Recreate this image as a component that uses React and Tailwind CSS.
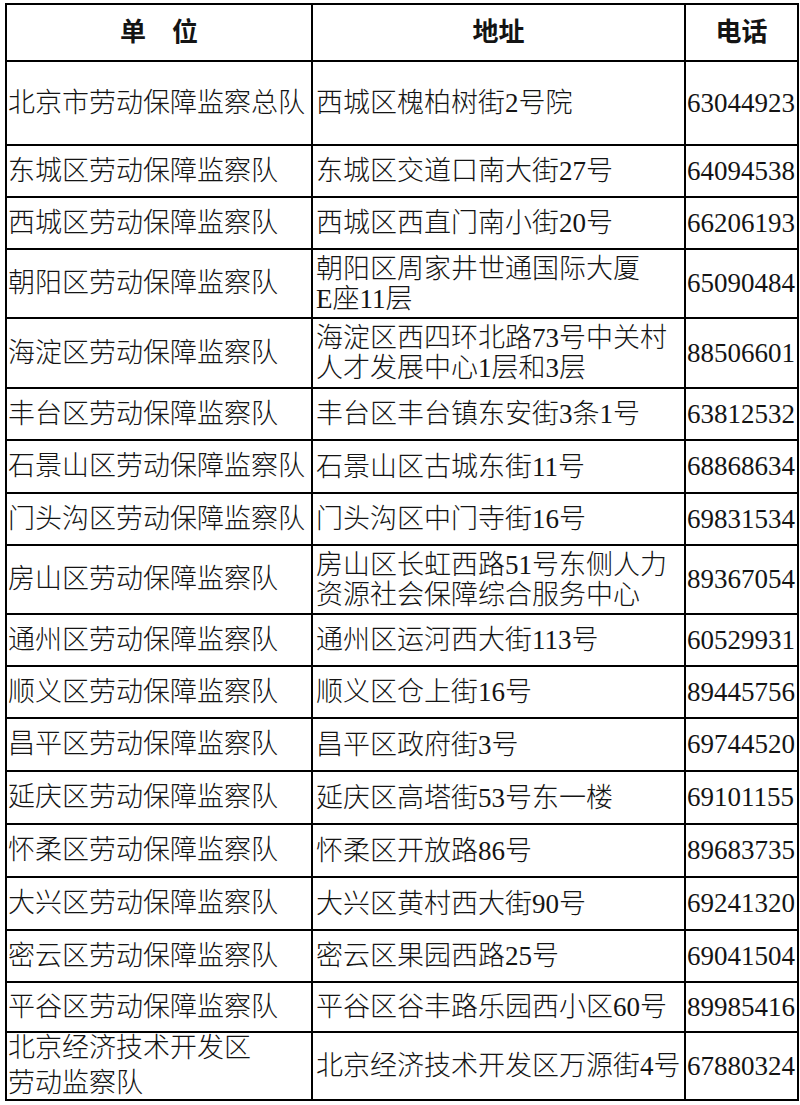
import React from "react";

const rows = [
  { h: "h-[84px]", a: "北京市劳动保障监察总队", b: "西城区槐柏树街2号院", c: "63044923" },
  { h: "h-[52px]", a: "东城区劳动保障监察队", b: "东城区交道口南大街27号", c: "64094538" },
  { h: "h-[52px]", a: "西城区劳动保障监察队", b: "西城区西直门南小街20号", c: "66206193" },
  { h: "h-[69px]", a: "朝阳区劳动保障监察队", b: ["朝阳区周家井世通国际大厦", "E座11层"], c: "65090484" },
  { h: "h-[70px]", a: "海淀区劳动保障监察队", b: ["海淀区西四环北路73号中关村", "人才发展中心1层和3层"], c: "88506601" },
  { h: "h-[52px]", a: "丰台区劳动保障监察队", b: "丰台区丰台镇东安街3条1号", c: "63812532" },
  { h: "h-[53px]", a: "石景山区劳动保障监察队", b: "石景山区古城东街11号", c: "68868634" },
  { h: "h-[52px]", a: "门头沟区劳动保障监察队", b: "门头沟区中门寺街16号", c: "69831534" },
  { h: "h-[69px]", a: "房山区劳动保障监察队", b: ["房山区长虹西路51号东侧人力", "资源社会保障综合服务中心"], c: "89367054" },
  { h: "h-[52px]", a: "通州区劳动保障监察队", b: "通州区运河西大街113号", c: "60529931" },
  { h: "h-[52px]", a: "顺义区劳动保障监察队", b: "顺义区仓上街16号", c: "89445756" },
  { h: "h-[53px]", a: "昌平区劳动保障监察队", b: "昌平区政府街3号", c: "69744520" },
  { h: "h-[53px]", a: "延庆区劳动保障监察队", b: "延庆区高塔街53号东一楼", c: "69101155" },
  { h: "h-[53px]", a: "怀柔区劳动保障监察队", b: "怀柔区开放路86号", c: "89683735" },
  { h: "h-[53px]", a: "大兴区劳动保障监察队", b: "大兴区黄村西大街90号", c: "69241320" },
  { h: "h-[52px]", a: "密云区劳动保障监察队", b: "密云区果园西路25号", c: "69041504" },
  { h: "h-[50px]", a: "平谷区劳动保障监察队", b: "平谷区谷丰路乐园西小区60号", c: "89985416" },
  { h: "h-[68px]", a: ["北京经济技术开发区", "劳动监察队"], b: "北京经济技术开发区万源街4号", c: "67880324", tall: true },
];

function Lines({ v }) {
  if (Array.isArray(v)) {
    return (
      <div>
        {v.map((t, i) => (
          <div key={i}>{t}</div>
        ))}
      </div>
    );
  }
  return <div>{v}</div>;
}

export default function App() {
  return (
    <div
      className="w-[800px] h-[1105px] bg-white pt-[3px] pl-[5px] text-[#141414]"
      style={{ fontFamily: '"Liberation Serif", "Noto Sans CJK SC", serif' }}
    >
      <div className="grid grid-cols-[306px_373px_113px] w-[794px] border-l-2 border-t-2 border-black">
        <div className="h-[57px] border-r-2 border-b-2 border-black flex items-center justify-center text-[26px] font-bold leading-none">
          单　位
        </div>
        <div className="h-[57px] border-r-2 border-b-2 border-black flex items-center justify-center text-[26px] font-bold leading-none">
          地址
        </div>
        <div className="h-[57px] border-r-2 border-b-2 border-black flex items-center justify-center text-[26px] font-bold leading-none">
          电话
        </div>
        {rows.map((r, i) => (
          <React.Fragment key={i}>
            <div
              className={`${r.h} border-r-2 border-b-2 border-black flex items-center pl-[1px] text-[27px] font-light whitespace-nowrap ${
                r.tall ? "leading-[35px]" : "leading-[31px]"
              }`}
            >
              <Lines v={r.a} />
            </div>
            <div className={`${r.h} border-r-2 border-b-2 border-black flex items-center pl-[3px] text-[27px] font-light leading-[30px] whitespace-nowrap`}>
              <Lines v={r.b} />
            </div>
            <div className={`${r.h} border-r-2 border-b-2 border-black flex items-center pl-[1px] text-[27px] leading-[31px] whitespace-nowrap`}>
              <Lines v={r.c} />
            </div>
          </React.Fragment>
        ))}
      </div>
    </div>
  );
}
